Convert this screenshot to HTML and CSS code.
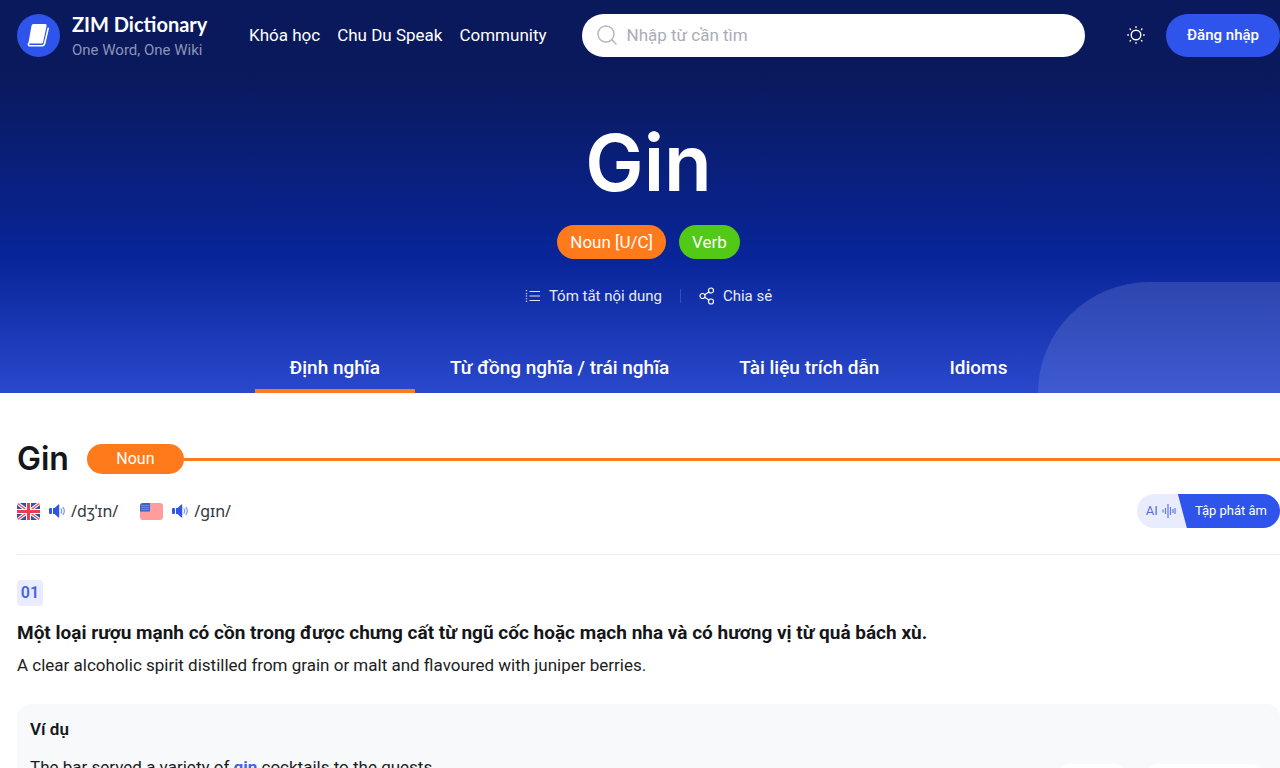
FILE: index.html
```html
<!DOCTYPE html>
<html lang="vi">
<head>
<meta charset="utf-8">
<meta name="viewport" content="width=device-width, initial-scale=1">
<title>Gin - ZIM Dictionary</title>
<link rel="stylesheet" href="styles.css">
</head>
<body>
<svg class="sprite" aria-hidden="true">
  <symbol id="speaker" viewBox="0 0 17 14">
    <rect x="0" y="4" width="3" height="6" rx="1" fill="#2f54eb"/>
    <path d="M4 4h1.500L9.500.4q.7-.4.700.4v12.400q0 .8-.7.400L5.500 10H4z" fill="#2f54eb"/>
    <path d="M12 4.800q1.400 2.200 0 4.400M14 3.400q2.600 3.600 0 7.200" fill="none" stroke="#7f96f5" stroke-width="1.200" stroke-linecap="round"/>
  </symbol>
</svg>
<div class="hero">
  <header class="topbar">
    <a class="brand" href="#">
      <svg class="logo" viewBox="0 0 43 43" aria-hidden="true">
        <circle cx="21.500" cy="21.500" r="21.500" fill="#2f54eb"/>
        <path d="M16.500 10h11.800q1.700 0 1.300 1.700l-3.500 16.500q-.3 1.300-1.700 1.300H13.200q-1.700 0-2.100 1.200l3.400-18.900q.4-1.800 2-1.800z" fill="#fff"/>
        <path d="M31.200 14.200l-3.600 15.600q-.5 2-2.500 2H13.200q-2.200 0-1.700-2.200" fill="none" stroke="#fff" stroke-width="1.600" stroke-linecap="round"/>
      </svg>
      <span class="brand-text"><strong>ZIM Dictionary</strong><small>One Word, One Wiki</small></span>
    </a>
    <nav class="main-nav">
      <a href="#">Khóa học</a><a href="#">Chu Du Speak</a><a href="#">Community</a>
    </nav>
    <label class="search">
      <svg width="22" height="22" viewBox="0 0 22 22" fill="none" stroke="#b4b8bf" stroke-width="1.500" stroke-linecap="round" aria-hidden="true"><circle cx="10" cy="10" r="8"/><path d="M16 16l4 4"/></svg>
      <input type="search" placeholder="Nhập từ cần tìm" aria-label="Nhập từ cần tìm">
    </label>
    <button class="theme" type="button" aria-label="Giao diện">
      <svg width="18" height="18" viewBox="0 0 18 18" fill="none" stroke="#fff" stroke-width="1.400" stroke-linecap="round" aria-hidden="true"><circle cx="9" cy="9" r="4.800"/><path d="M9 .8v.6M9 16.600v.6M.8 9h.6M16.600 9h.6M3.100 3.100l.4.400M14.500 14.500l.4.400M3.100 14.900l.4-.4M14.500 3.500l.4-.4"/></svg>
    </button>
    <button class="login" type="button">Đăng nhập</button>
  </header>
  <h1>Gin</h1>
  <div class="types"><span class="type noun">Noun [U/C]</span><span class="type verb">Verb</span></div>
  <div class="actions">
    <button type="button">
      <svg width="16" height="14" viewBox="0 0 16 14" fill="none" stroke="#dfe4f7" aria-hidden="true"><path d="M4.500 2.500H15M4.500 7H15M4.500 11.500H15" stroke-width="1.100"/><path d="M.8 1.700h1.400M.8 4.700h1.400M.8 7h1.400M.8 9.800h1.400M.8 12.300h1.400" stroke-width="1"/></svg>
      Tóm tắt nội dung
    </button>
    <span class="divider"></span>
    <button type="button">
      <svg width="16" height="18" viewBox="0 0 16 18" fill="none" stroke="#fff" stroke-width="1.200" aria-hidden="true"><circle cx="3.500" cy="9" r="2.500"/><circle cx="12" cy="3.500" r="2.500"/><circle cx="12" cy="14.500" r="2.500"/><path d="M5.700 7.700l4.200-2.800M5.700 10.300l4.200 2.800"/></svg>
      Chia sẻ
    </button>
  </div>
  <nav class="tabs">
    <a class="active" href="#">Định nghĩa</a><a href="#">Từ đồng nghĩa / trái nghĩa</a><a href="#">Tài liệu trích dẫn</a><a href="#">Idioms</a>
  </nav>
</div>
<main>
  <div class="entry">
    <h2>Gin</h2><span class="entry-type">Noun</span><span class="rule"></span>
  </div>
  <div class="speech">
    <div class="accent">
      <svg width="23" height="17" viewBox="0 0 23 17" aria-label="UK">
        <defs><clipPath id="uk"><rect width="23" height="17" rx="3"/></clipPath></defs>
        <g clip-path="url(#uk)"><rect width="23" height="17" fill="#3450a8"/><path d="M0 0l23 17M23 0L0 17" stroke="#fff" stroke-width="3.400"/><path d="M0 0l23 17M23 0L0 17" stroke="#e84850" stroke-width="1.200"/><path d="M11.500 0v17M0 8.500h23" stroke="#fff" stroke-width="5"/><path d="M11.500 0v17M0 8.500h23" stroke="#e8404a" stroke-width="3"/></g>
      </svg>
      <button class="play" type="button" aria-label="Phát âm UK"><svg width="17" height="14" aria-hidden="true"><use href="#speaker"/></svg></button>
      <span>/dʒˈɪn/</span>
    </div>
    <div class="accent">
      <svg width="23" height="17" viewBox="0 0 23 17" aria-label="US">
        <rect width="23" height="17" rx="3" fill="#ff9c9c"/><path d="M3 0h7v8.500H0V3q0-3 3-3z" fill="#3b62c4"/><path d="M1.500 2.500h8M1.500 4.500h8M1.500 6.500h8" stroke="#9db8f0" stroke-dasharray="1 1"/>
      </svg>
      <button class="play" type="button" aria-label="Phát âm US"><svg width="17" height="14" aria-hidden="true"><use href="#speaker"/></svg></button>
      <span>/gɪn/</span>
    </div>
    <button class="practice" type="button">
      <span class="ai">AI
        <svg width="14" height="14" viewBox="0 0 14 14" fill="none" stroke="#6079ed" stroke-width="1.200" aria-hidden="true"><path d="M1 5.500v3M3.500 4v6M6 0v14M8.500 3v8M11 5v4M13 4v6"/></svg>
      </span>
      <span class="practice-text">Tập phát âm</span>
    </button>
  </div>
  <section class="meaning">
    <span class="number">01</span>
    <h3>Một loại rượu mạnh có cồn trong được chưng cất từ ngũ cốc hoặc mạch nha và có hương vị từ quả bách xù.</h3>
    <p>A clear alcoholic spirit distilled from grain or malt and flavoured with juniper berries.</p>
    <div class="examples">
      <h4>Ví dụ</h4>
      <div class="example">
        <p>The bar served a variety of <b>gin</b> cocktails to the guests.</p>
        <span class="tools"><span class="tool"></span><span class="tool wide"></span></span>
      </div>
    </div>
  </section>
</main>
</body>
</html>
```
FILE: styles.css
```css
* { box-sizing: border-box; }
body {
  margin: 0;
  height: 100vh;
  overflow: hidden;
  font: 17px/26px Roboto, "Noto Sans", sans-serif;
  color: #1b1d22;
  background: #fff;
}
a { color: inherit; text-decoration: none; }
button { font: inherit; color: inherit; border: 0; padding: 0; background: none; cursor: pointer; }
h1, h2, h3, h4, p { margin: 0; }
svg { flex: none; display: block; }
.sprite { display: none; }

.hero {
  position: relative;
  padding-left: 17px;
  color: #fff;
  background: linear-gradient(#0a195b 0, #0a195b 18%, #08259a 66%, #2a48cc 100%);
}
.hero::after {
  content: "";
  position: absolute;
  right: 0;
  bottom: 0;
  width: 242px;
  height: 111px;
  border-top-left-radius: 111px;
  background: linear-gradient(rgba(255, 255, 255, .13), rgba(255, 255, 255, .1));
  pointer-events: none;
}
.topbar { display: flex; align-items: center; height: 70px; }
.brand { display: flex; align-items: center; gap: 12px; width: 232px; }
.logo { width: 43px; height: 43px; }
.brand-text { display: flex; flex-direction: column; padding-top: 3px; white-space: nowrap; }
.brand-text strong { font: 700 20px/26px Lato, sans-serif; }
.brand-text small { font-size: 15px; line-height: 26px; color: #8c94b8; }
.main-nav { display: flex; gap: 17px; white-space: nowrap; }
.search {
  flex: 1;
  display: flex;
  align-items: center;
  gap: 9px;
  height: 43px;
  margin: 0 34px 0 35px;
  padding: 0 14px;
  border-radius: 22px;
  background: #fff;
}
.search input { flex: 1; min-width: 0; padding: 0; border: 0; outline: 0; font: inherit; background: none; }
.search input::placeholder { color: #a9adb5; }
.theme { margin: 0 21px 0 8px; }
.login { height: 43px; padding: 0 21px; border-radius: 22px; background: #2f54eb; font-size: 15px; font-weight: 500; }

.hero h1 { margin-top: 45px; font: 600 78px/96px Inter, sans-serif; text-align: center; }
.types { display: flex; justify-content: center; gap: 13px; margin-top: 14px; }
.type { padding: 0 13px; border-radius: 17px; line-height: 34px; }
.noun { background: #ff7a1a; }
.verb { background: #52c817; }
.actions { display: flex; justify-content: center; align-items: center; gap: 18px; margin-top: 24px; font-size: 15px; color: #e6eafa; }
.actions button { display: flex; align-items: center; gap: 8px; }
.divider { width: 1px; height: 14px; background: #334fbc; }
.tabs { display: flex; justify-content: center; margin-top: 34px; font-size: 19px; font-weight: 500; }
.tabs a { padding: 12px 35px 8px; border-bottom: 4px solid transparent; white-space: nowrap; }
.tabs .active { border-color: #ff7a1a; }

main { padding-left: 17px; }
.entry { display: flex; align-items: center; margin-top: 45px; }
.entry h2 { margin-right: 18px; font: 600 32px/42px Inter, sans-serif; color: #14161a; }
.entry-type { width: 97px; border-radius: 15px; background: #ff7a1a; color: #fff; font-size: 16px; line-height: 30px; text-align: center; }
.rule { flex: 1; height: 3px; background: #ff7a1a; }
.speech { display: flex; align-items: center; gap: 22px; padding: 14px 0 26px; border-bottom: 1px solid #eceef0; }
.accent { display: flex; align-items: center; }
.accent span { font: 16px/24px "Noto Sans", sans-serif; color: #33363b; }
.play { margin: 0 5px 0 9px; }
.practice {
  display: flex;
  height: 34px;
  margin-left: auto;
  border-radius: 17px;
  overflow: hidden;
  background: #e8ecfd;
  font-size: 13px;
  line-height: 34px;
}
.ai { display: flex; align-items: center; gap: 4px; padding-left: 9px; color: #5470ec; }
.practice-text { margin-left: 2px; padding: 0 13px 0 17px; color: #fff; background: #2f54eb; clip-path: polygon(0 0, 100% 0, 100% 100%, 9px 100%); }

.meaning { padding-top: 24px; }
.number { display: inline-block; width: 26px; border-radius: 4px; background: #e8ecfd; color: #4562e8; font-size: 16px; font-weight: 600; text-align: center; }
.meaning h3 { margin-top: 11px; font-size: 19px; line-height: 32px; font-weight: 700; color: #14161a; }
.meaning > p { line-height: 32px; }
.examples { margin-top: 23px; padding: 12px 13px; border-radius: 13px; background: #f7f9fb; }
.examples h4 { font-size: 17px; font-weight: 600; color: #14161a; }
.example { display: flex; justify-content: space-between; align-items: flex-start; margin-top: 12px; }
.example b { color: #4562e8; }
.tools { display: flex; gap: 13px; margin-top: 10px; }
.tool { width: 74px; height: 34px; border-radius: 17px; background: #fff; }
.wide { width: 125px; }
```
